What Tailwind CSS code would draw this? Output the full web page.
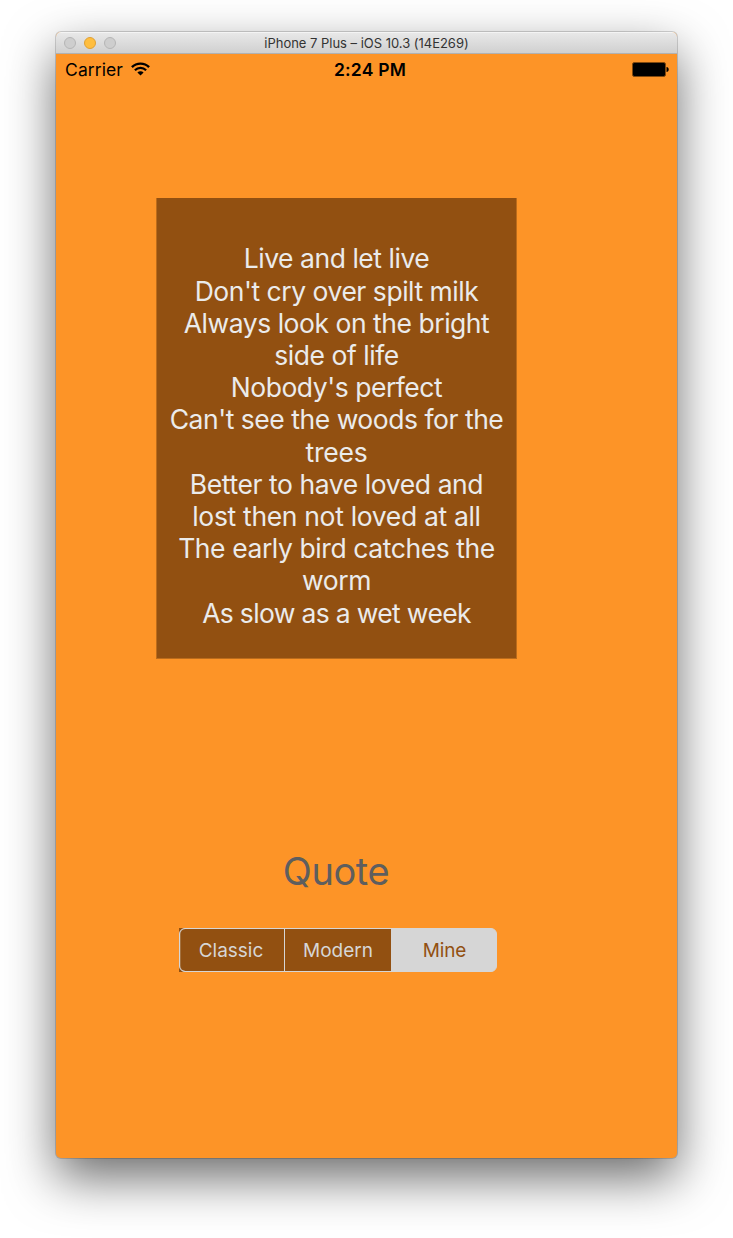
<!DOCTYPE html>
<html lang="en">
<head>
<meta charset="utf-8">
<title>iPhone 7 Plus</title>
<script src="https://cdn.jsdelivr.net/npm/@tailwindcss/browser@4"></script>
</head>
<body class="bg-white w-[733px] h-[1238px] overflow-hidden pt-8 pl-14 font-['Inter',sans-serif]">
<main class="w-[621px] h-[1126px] flex flex-col rounded-[5px] overflow-hidden bg-[#fd9427] shadow-[0_0_0_1px_rgba(0,0,0,0.16),0_20px_50px_rgba(0,0,0,0.58)]">
  <header class="h-[22px] shrink-0 grid grid-cols-[1fr_auto_1fr] items-center bg-linear-to-b from-[#e8e8e8] to-[#d0d0d0] border-t border-t-[#f4f4f4] border-b border-b-[#b1b1b1]">
    <div class="flex gap-2 pl-2">
      <span class="size-3 rounded-full bg-[#cecece] border border-[#b5b5b5]"></span>
      <span class="size-3 rounded-full bg-[#ffbe3f] border border-[#dfa034]"></span>
      <span class="size-3 rounded-full bg-[#cecece] border border-[#b5b5b5]"></span>
    </div>
    <h1 class="text-[13px] leading-5 text-[#333] tracking-[-0.02px] whitespace-nowrap">iPhone 7 Plus – iOS 10.3 (14E269)</h1>
  </header>
  <div class="h-8 shrink-0 grid grid-cols-[1fr_auto_1fr] items-center pl-[9px] pr-2 text-black">
    <div class="flex items-center gap-2">
      <span class="text-[17.5px] leading-8 tracking-[0.1px]">Carrier</span>
      <svg class="w-[19px] h-[14px] mb-0.5" viewBox="0 0 19 14" fill="none" stroke="#000">
        <path d="M.9 5.2a12.2 12.2 0 0 1 17.2 0" stroke-width="2.4"/>
        <path d="M3.9 8.2a7.9 7.9 0 0 1 11.2 0" stroke-width="2.2"/>
        <path d="M6.4 10.5a4.4 4.4 0 0 1 6.2 0L9.5 13.6Z" fill="#000" stroke="none"/>
      </svg>
    </div>
    <span class="text-[17.5px] leading-8 font-semibold tracking-[0.2px] pl-[6px]">2:24 PM</span>
    <svg class="w-[37px] h-[15px] mb-0.5 justify-self-end" viewBox="0 0 37 15">
      <rect x=".5" y=".5" width="33" height="14" rx="1.8" fill="#000" stroke="#80490f"/>
      <path d="M34.5 5C37.4 5.2 37.4 9.8 34.5 10Z" fill="#000"/>
    </svg>
  </div>
  <section class="w-[361px] h-[461px] shrink-0 mt-28 ml-[100px] pt-[44.3px] bg-[#925011] border-x border-b border-[#bc6c1b] text-[#ebebeb] text-center text-[26.5px] leading-[32.22px] tracking-[-0.47px] whitespace-nowrap">
    <p>Live and let live</p>
    <p>Don't cry over spilt milk</p>
    <p>Always look on the bright</p>
    <p>side of life</p>
    <p>Nobody's perfect</p>
    <p>Can't see the woods for the</p>
    <p class="tracking-[-0.2px]">trees</p>
    <p class="tracking-[-0.42px]">Better to have loved and</p>
    <p class="tracking-[-0.33px]">lost then not loved at all</p>
    <p class="tracking-[-0.42px]">The early bird catches the</p>
    <p>worm</p>
    <p class="tracking-[-0.67px]">As slow as a wet week</p>
  </section>
  <h2 class="w-[360px] ml-[100px] mt-[188px] text-center text-[38px] leading-[48px] tracking-[-0.4px] text-[#5e5e5e]">Quote</h2>
  <div class="w-[318px] h-[44px] ml-[123px] mt-[33px] shrink-0 bg-linear-to-r from-[#925011] from-50% to-transparent to-50%">
    <div class="h-full flex rounded-[6px] overflow-hidden border border-[#d6d6d6] text-[19px] text-[#d6d6d6] leading-[43px] text-center bg-[#d6d6d6]">
      <span class="w-[104px] bg-[#925011] pr-0.5 rounded-l-[5px] shadow-[inset_0.5px_0_0_0_#b59470]">Classic</span>
      <span class="w-[107px] bg-[#925011] border-l border-[#d6d6d6]">Modern</span>
      <span class="flex-1 text-[#925011] pl-0.5 tracking-[-0.1px]">Mine</span>
    </div>
  </div>
</main>
</body>
</html>
